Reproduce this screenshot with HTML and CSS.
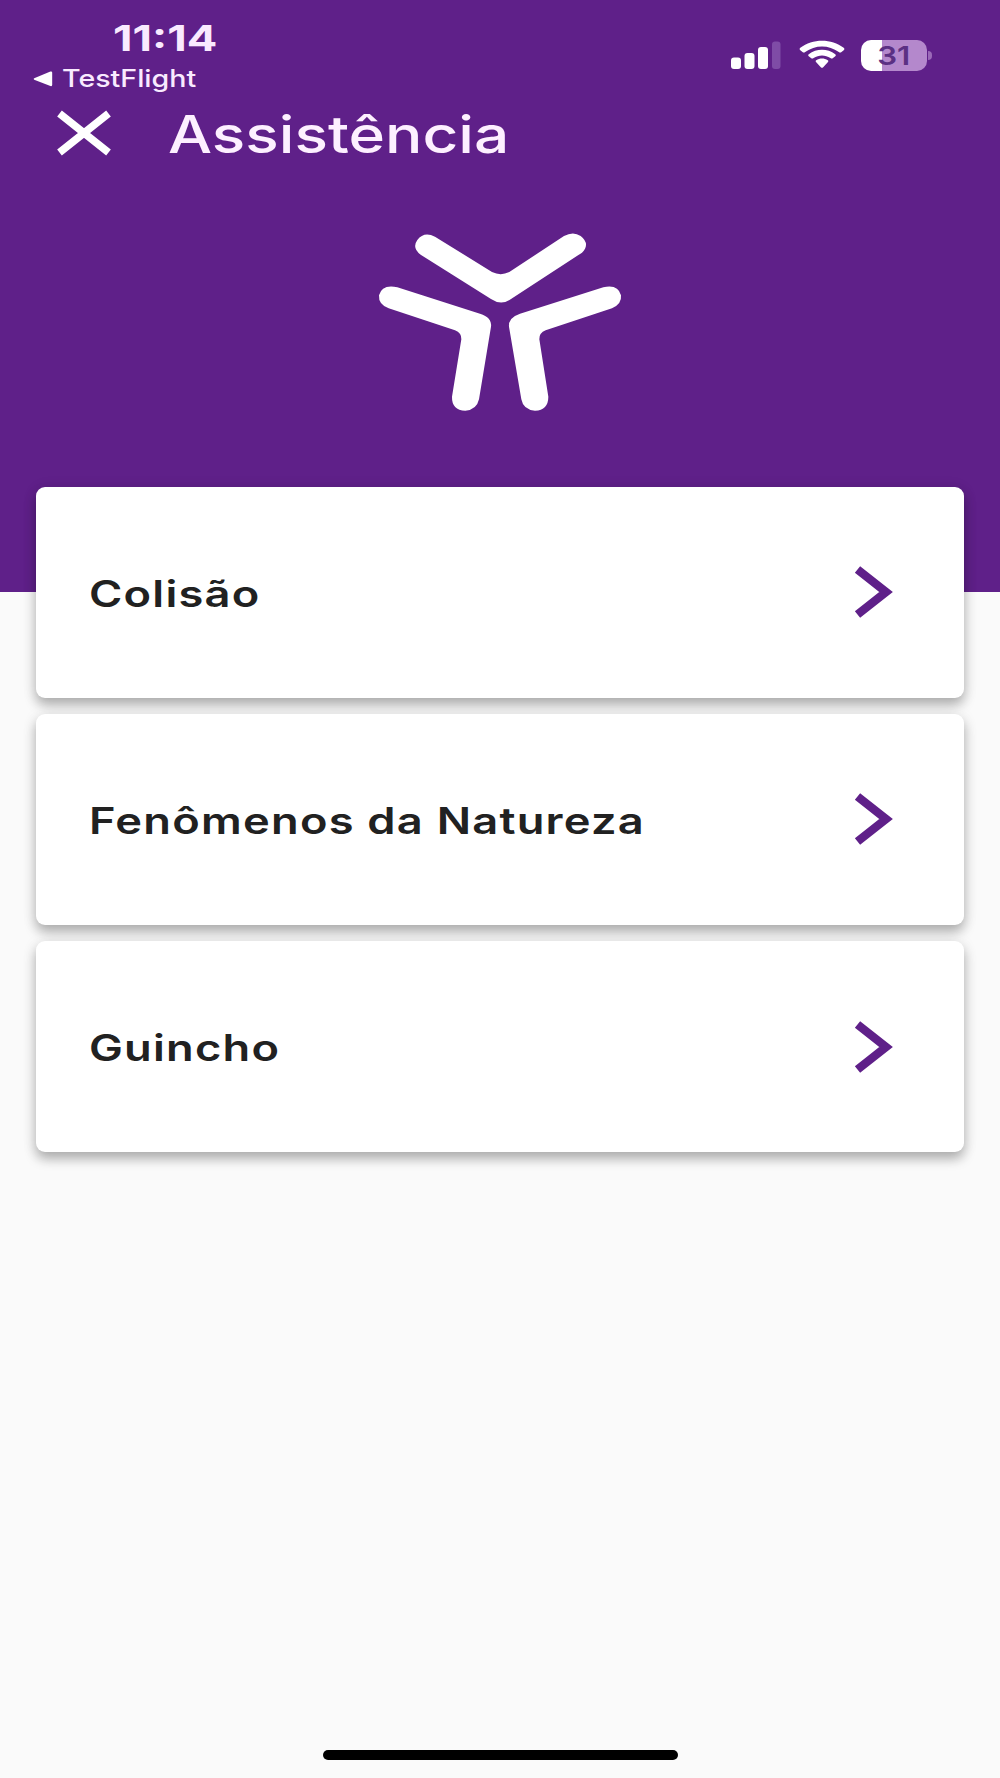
FILE: index.html
```html
<!DOCTYPE html>
<html lang="pt-BR">
<head>
<meta charset="utf-8">
<meta name="viewport" content="width=device-width">
<title>Assistência</title>
<link rel="stylesheet" href="styles.css">
</head>
<body>
<div class="screen">
  <header class="hero">
    <div class="status">
      <div class="status-left">
        <div class="time"><span class="wide">11:14</span></div>
        <div class="back">
          <svg class="back-arrow" viewBox="0 0 20 16"><path d="M1.200 7.200 17.400.6q1.800-.5 1.800 1.200v12q0 1.800-1.800 1.200L1.200 8.700Q0 7.900 1.200 7.200z"/></svg>
          <span class="wide">TestFlight</span>
        </div>
      </div>
      <div class="status-right">
        <svg class="signal" viewBox="0 0 51 30"><rect x="0" y="17.500" width="10" height="11.500" rx="3"/><rect x="13.500" y="13" width="10" height="16" rx="3"/><rect x="27" y="7" width="10" height="22" rx="3"/><rect class="dim" x="41" y="1.500" width="8.500" height="27.500" rx="3"/></svg>
        <svg class="wifi" viewBox="0 0 46 30"><path d="M1.300 10.300Q0 9 1.300 7.800C13.500-1.700 32.500-1.700 44.700 7.800Q46 9 44.700 10.300L42.500 12Q41.200 13 39.800 12C30 4.500 16 4.500 6.200 12Q4.800 13 3.500 12Z"/><path d="M9.700 16.300Q8.500 15.200 9.700 14.200C17.500 8.300 28.500 8.300 36.300 14.200Q37.500 15.200 36.300 16.300L34 18Q32.700 19 31.400 18C26.200 14.600 19.800 14.600 14.600 18Q13.300 19 12 18Z"/><path d="M17 22Q16 21 17.200 20.200C20.700 18 25.300 18 28.800 20.200Q30 21 29 22L24.200 27.200Q23 28.300 21.800 27.200Z"/></svg>
        <div class="battery"><span class="level">31</span></div>
        <span class="battery-cap"></span>
      </div>
    </div>
    <div class="titlebar">
      <svg class="close" viewBox="0 0 54 44"><path d="M2.500 2.500 51.500 41.500M51.500 2.500 2.500 41.500"/></svg>
      <h1><span class="wide">Assistência</span></h1>
    </div>
    <svg class="logo" viewBox="54 39 732 534">
      <path d="M225 50L396 156Q422 169 448 156L612 48Q640 33 662 48Q692 72 666 98L453 237Q424 258 393 237L182 104Q155 84 172 60Q192 33 225 50Z"/>
      <path d="M112 202L360 281Q396 292 393 320L357 538Q350 570 316 572Q275 570 276 530L304 358Q305 339 285 331L86 265Q55 254 57 226Q66 192 112 202Z"/>
      <path d="M730 202L480 281Q444 293 447 320L484 538Q490 570 525 572Q565 570 565 530L538 358Q537 339 557 331L756 265Q786 252 783 226Q774 192 730 202Z"/>
    </svg>
  </header>
  <main class="cards">
    <a class="card"><span class="label">Colisão</span><svg class="chevron" viewBox="0 0 38 52"><path d="M2.500 3.500 31 26 2.500 48.500"/></svg></a>
    <a class="card"><span class="label">Fenômenos da Natureza</span><svg class="chevron" viewBox="0 0 38 52"><path d="M2.500 3.500 31 26 2.500 48.500"/></svg></a>
    <a class="card"><span class="label">Guincho</span><svg class="chevron" viewBox="0 0 38 52"><path d="M2.500 3.500 31 26 2.500 48.500"/></svg></a>
  </main>
  <div class="home"></div>
</div>
</body>
</html>
```
FILE: styles.css
```css
* { box-sizing: border-box; }
body { margin: 0; background: #fafafa; font-family: Inter, "Liberation Sans", sans-serif; }
svg { display: block; flex: none; }
.screen { height: 1778px; display: flex; flex-direction: column; }
.hero { height: 592px; background: #5f2089; color: #fff; flex: none; }
.wide { display: inline-block; white-space: nowrap; transform-origin: left center; }

.status { height: 102px; display: flex; justify-content: space-between; }
.status-left { padding: 19px 0 0 33px; color: #f9eaff; }
.time { padding-left: 80px; font-size: 35.500px; line-height: 40px; font-weight: 650; }
.time .wide { transform: scaleX(1.275); }
.back { display: flex; align-items: center; gap: 9px; margin-top: 6px; font-size: 24px; line-height: 28px; font-weight: 550; }
.back .wide { transform: scaleX(1.190); }
.back-arrow { width: 20px; height: 16px; fill: #fff; }
.status-right { display: flex; align-items: flex-start; padding: 40px 68px 0 0; }
.signal { width: 51px; height: 30px; fill: #fff; }
.signal .dim { fill: #7f4ca6; }
.wifi { width: 46px; height: 30px; margin-left: 17px; fill: #fff; }
.battery { width: 66px; height: 31px; margin-left: 16px; border-radius: 10px; background: linear-gradient(90deg, #fff 21px, #b488cc 21px); color: #5b3083; text-align: center; font-size: 26px; line-height: 31px; font-weight: 600; }
.level { display: inline-block; transform: scaleX(1.200); }
.battery-cap { width: 4px; height: 9px; margin: 11px 0 0 1px; border-radius: 0 5px 5px 0; background: #9b69b8; }

.titlebar { display: flex; align-items: flex-start; padding-left: 57px; height: 64px; }
.close { width: 54px; height: 44px; margin-top: 9px; stroke: #fff; stroke-width: 7.500; fill: none; overflow: visible; }
h1 { margin: 0 0 0 57px; font-size: 51.500px; line-height: 64px; font-weight: 450; color: #fdf0ff; }
h1 .wide { transform: scaleX(1.207); }
.logo { width: 244px; height: 178px; margin: 67px auto 0; fill: #fff; }

.cards { display: flex; flex-direction: column; gap: 16.300px; margin: -105.500px 36px 0; }
.card { height: 211px; flex: none; display: flex; align-items: center; justify-content: space-between; padding: 0 71px 0 52.500px; background: #fff; border-radius: 9px; box-shadow: 0 7px 12px rgba(0,0,0,.27), 0 2px 16px rgba(0,0,0,.09); }
.label { padding-top: 3px; font-size: 36.500px; line-height: 44px; font-weight: 600; letter-spacing: 1px; color: #212121; white-space: nowrap; transform: scaleX(1.239); transform-origin: left center; }
.chevron { width: 38px; height: 52px; fill: none; stroke: #5f2089; stroke-width: 8.500; overflow: visible; }
.home { width: 355px; height: 10px; margin: auto auto 18px; border-radius: 5px; background: #000; }
```
